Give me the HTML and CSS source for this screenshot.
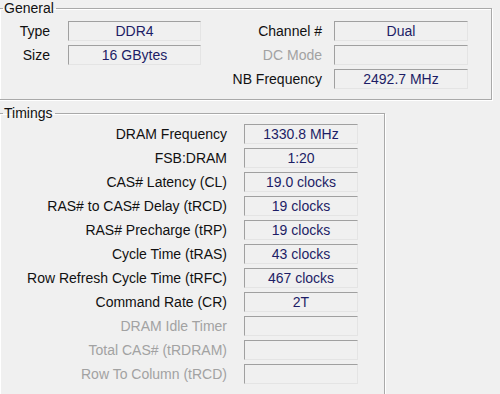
FILE: index.html
```html
<!DOCTYPE html>
<html lang="en">
  <head>
    <meta charset="UTF-8" />
    <title>Memory</title>
    <link rel="stylesheet" href="styles.css">
  </head>
  <body>
    <fieldset class="group general">
      <legend>General</legend>
      <div class="general-grid">
        <span class="label">Type</span>
        <span class="value">DDR4</span>
        <span class="label">Channel #</span>
        <span class="value">Dual</span>

        <span class="label">Size</span>
        <span class="value">16 GBytes</span>
        <span class="label disabled">DC Mode</span>
        <span class="value"></span>

        <span class="label"></span>
        <span class="spacer"></span>
        <span class="label">NB Frequency</span>
        <span class="value">2492.7 MHz</span>
      </div>
    </fieldset>

    <fieldset class="group timings">
      <legend>Timings</legend>
      <div class="timings-grid">
        <span class="label">DRAM Frequency</span>
        <span class="value">1330.8 MHz</span>
        <span class="label">FSB:DRAM</span>
        <span class="value">1:20</span>
        <span class="label">CAS# Latency (CL)</span>
        <span class="value">19.0 clocks</span>
        <span class="label">RAS# to CAS# Delay (tRCD)</span>
        <span class="value">19 clocks</span>
        <span class="label">RAS# Precharge (tRP)</span>
        <span class="value">19 clocks</span>
        <span class="label">Cycle Time (tRAS)</span>
        <span class="value">43 clocks</span>
        <span class="label">Row Refresh Cycle Time (tRFC)</span>
        <span class="value">467 clocks</span>
        <span class="label">Command Rate (CR)</span>
        <span class="value">2T</span>
        <span class="label disabled">DRAM Idle Timer</span>
        <span class="value"></span>
        <span class="label disabled">Total CAS# (tRDRAM)</span>
        <span class="value"></span>
        <span class="label disabled">Row To Column (tRCD)</span>
        <span class="value"></span>
      </div>
    </fieldset>
  </body>
</html>
```

FILE: styles.css
```css
body {
  margin: 0;
  background-color: #f0f0f0;
  font-family: "Liberation Sans", Arial, sans-serif;
  font-size: 14px;
  color: #111;
  overflow: hidden;
}
.group {
  margin: 0 0 0 -1px;
  padding: 0;
  border: 1px solid #a9a9a9;
  box-shadow: inset 1px 1px 0 #fff, 1px 1px 0 #fff;
}
.group legend {
  margin-left: 2px;
  padding: 0 2px 0 1px;
  line-height: 16px;
  color: #111;
}
.general {
  width: 490px;
  padding: 5px 0 10px 1px;
}
.timings {
  width: 383px;
  margin-top: 5px;
  padding: 3px 0 20px 1px;
}
.general-grid {
  display: grid;
  grid-template-columns: 67px 133px 133px 134px;
  grid-auto-rows: 20px;
  row-gap: 4px;
}
.timings-grid {
  display: grid;
  grid-template-columns: 243px 114px;
  grid-auto-rows: 20px;
  row-gap: 4px;
}
.label {
  text-align: right;
  line-height: 20px;
  white-space: nowrap;
  padding-right: 17px;
}
.general-grid .label {
  padding-right: 18px;
}
.general-grid .label:nth-child(4n+3) {
  padding-right: 12px;
}
.value {
  box-sizing: border-box;
  border-top: 1px solid #a0a0a0;
  border-left: 1px solid #a0a0a0;
  border-right: 1px solid #e4e4e4;
  border-bottom: 1px solid #e4e4e4;
  text-align: center;
  line-height: 18px;
  color: #1d1d66;
  white-space: nowrap;
}
.disabled {
  color: #a2a2a2;
}
```
